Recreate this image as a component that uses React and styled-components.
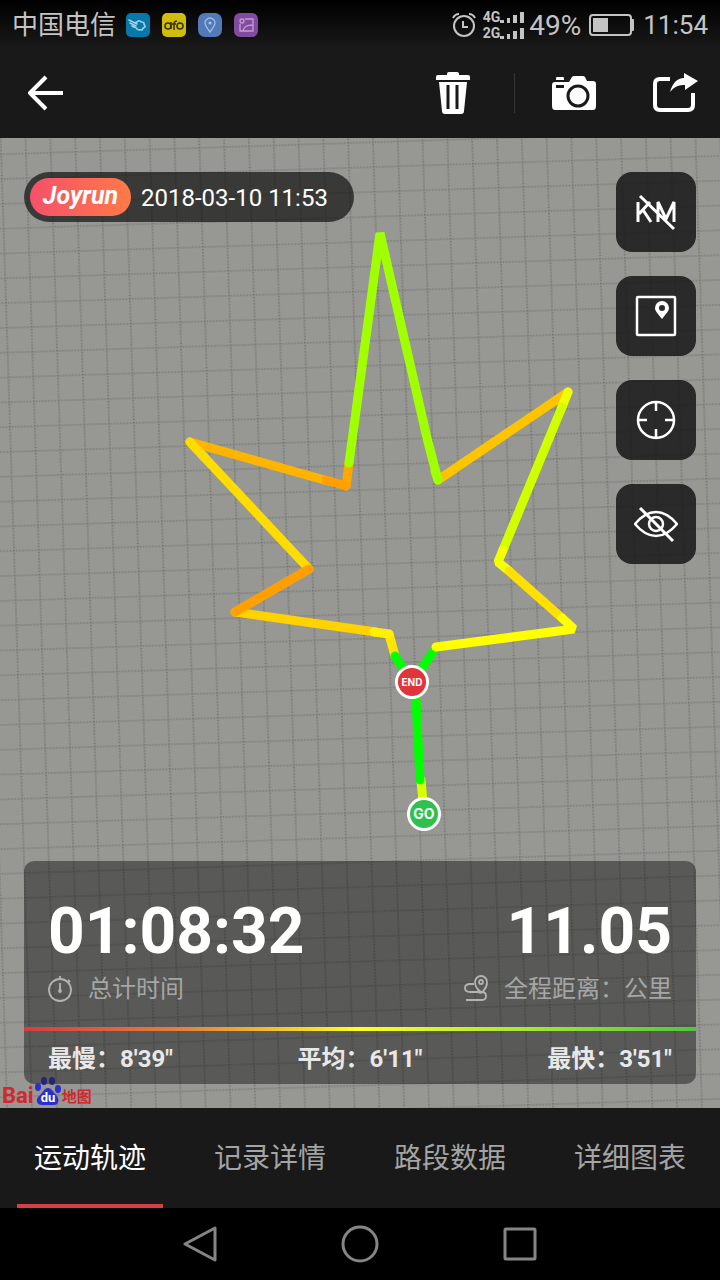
import React, { useState } from 'react';
import styled, { createGlobalStyle } from 'styled-components';

const tabs = ['运动轨迹', '记录详情', '路段数据', '详细图表'];

const segments = [
    { points: '424,676 421,642', color: '#d8ff00' },
    { points: '412,544 416,562 420,642', color: '#00ff00' },
    { points: '412,544 433,514', color: '#00ff00' },
    { points: '389,496 395,518', color: '#ffe600' },
    { points: '412,544 395,518', color: '#00ff00' },
    { points: '235,474 376,494', color: '#ffd200' },
    { points: '374,494 389,496', color: '#fff000' },
    { points: '190,304 309,431', color: '#ffdc00' },
    { points: '309,431 235,474', color: '#ffa000' },
    { points: '346,348 349,325', color: '#ffa800' },
    { points: '190,304 328,343', color: '#ffb400' },
    { points: '326,342 346,348', color: '#ffa000' },
    { points: '190,304 206,321', color: '#ffdc00' },
    { points: '349,325 380,95 427,300 438,342', color: '#a0ff00' },
    { points: '438,342 568,254', color: '#ffc400' },
    { points: '438,342 435,333', color: '#a0ff00' },
    { points: '568,254 562,269', color: '#f0ff00' },
    { points: '562,269 503,412', color: '#d2ff00' },
    { points: '503,412 498,424 509,433', color: '#f4ff00' },
    { points: '509,433 562,480', color: '#ffe000' },
    { points: '562,480 574,491 436,509', color: '#ffff00' },
];

export default function App() {
    const [active, setActive] = useState(tabs[0]);

    return (
        <Page>
            <GlobalStyle />
            <StatusBar />
            <Toolbar />
            <MapArea>
                <RouteMap />
                <MapTop>
                    <DatePill>
                        <Brand>Joyrun</Brand>
                        <time>2018-03-10 11:53</time>
                    </DatePill>
                    <MapControls />
                </MapTop>
                <Summary />
                <BaiduLogo />
            </MapArea>
            <TabBar>
                {tabs.map((tab) => (
                    <Tab key={tab} $active={tab === active} onClick={() => setActive(tab)}>{tab}</Tab>
                ))}
            </TabBar>
            <SystemNav />
        </Page>
    );
}

function StatusBar() {
    return (
        <StatusRow>
            <StatusGroup>
                <Carrier>中国电信</Carrier>
                <AppBadges>
                    <svg width="24" height="24" viewBox="0 0 24 24">
                        <rect width="24" height="24" rx="5" fill="#0878a8" />
                        <path d="M3 7l8 4M4 10l6 3M6 13c3 2 5 1 5 3 2 2 4 0 5 1 1-1 0-2 3-3 1-2-2-2-1-4-2-2-3 0-4-2-2-1-2 1-4 1" fill="none" stroke="#9fd2e2" strokeWidth="1.6" strokeLinecap="round" />
                    </svg>
                    <svg width="24" height="24" viewBox="0 0 24 24">
                        <rect width="24" height="24" rx="5" fill="#d0bd0d" />
                        <g fill="none" stroke="#3a350c" strokeWidth="1.6">
                            <circle cx="6" cy="13" r="3" />
                            <circle cx="18" cy="13" r="3" />
                            <path d="M9 9v7M12 17v-6q0-3 3-3M10 11h4" />
                        </g>
                    </svg>
                    <svg width="24" height="24" viewBox="0 0 24 24">
                        <rect width="24" height="24" rx="7" fill="#5279b8" />
                        <path d="M12 19C9 15 7 12 7 10a5 5 0 0 1 10 0c0 2-2 5-5 9z" fill="none" stroke="#a3bce0" strokeWidth="1.3" />
                        <circle cx="12" cy="10" r="1.5" fill="#b4c8e4" />
                    </svg>
                    <svg width="24" height="24" viewBox="0 0 24 24">
                        <rect width="24" height="24" rx="6" fill="#814ba0" />
                        <g fill="none" stroke="#c49dd6" strokeWidth="1.3">
                            <path d="M11 6h8v12H6v-7M9 18c1-4 3-6 10-6" />
                            <circle cx="8" cy="8" r="2" />
                        </g>
                    </svg>
                </AppBadges>
            </StatusGroup>
            <StatusGroup>
                <svg width="26" height="26" viewBox="0 0 26 26" fill="none" stroke="#c4c4c4" strokeWidth="2">
                    <circle cx="13" cy="14" r="10" />
                    <path d="M12 9v6h5M2 6q2-4 6-4M24 6q-2-4-6-4" />
                </svg>
                <Signals>
                    <Signal><span>4G</span><Bars /></Signal>
                    <Signal><span>2G</span><Bars /></Signal>
                </Signals>
                <Battery>49%</Battery>
                <svg width="46" height="24" viewBox="0 0 46 24">
                    <rect x="1" y="2" width="41" height="20" rx="3" fill="none" stroke="#c4c4c4" strokeWidth="2" />
                    <rect x="4" y="5" width="15" height="14" fill="#c4c4c4" />
                    <rect x="42" y="6" width="3" height="12" rx="1" fill="#c4c4c4" />
                </svg>
                <Clock>11:54</Clock>
            </StatusGroup>
        </StatusRow>
    );
}

function Bars() {
    return (
        <svg width="24" height="14" viewBox="0 0 24 14" fill="#c4c4c4">
            <rect x="0" y="9" width="4" height="3" />
            <rect x="7" y="7" width="3" height="5" />
            <rect x="13" y="4" width="4" height="8" />
            <rect x="20" y="1" width="4" height="11" />
        </svg>
    );
}

function Toolbar() {
    return (
        <ToolbarRow>
            <IconButton aria-label="返回">
                <svg width="36" height="36" viewBox="0 0 36 36" fill="none" stroke="#fff" strokeWidth="4">
                    <path d="M18 2L2 18l16 16M2 18h33" strokeLinejoin="round" />
                </svg>
            </IconButton>
            <Actions>
                <IconButton aria-label="删除">
                    <svg width="34" height="42" viewBox="0 0 34 42" fill="#fff">
                        <path d="M11 3V2q0-2 2-2h8q2 0 2 2v1h9q2 0 2 2v3H0V5q0-2 2-2zM3 10h28l-3 29q0 3-3 3H9q-3 0-3-3z" />
                        <path d="M12 13v24M21 13v24" stroke="#191919" strokeWidth="3" />
                    </svg>
                </IconButton>
                <Divider />
                <IconButton aria-label="相机">
                    <svg width="44" height="34" viewBox="0 0 44 34">
                        <path d="M4 2q0-1 1-1h6q1 0 1 1v2H4zM3 6h14l3-5q1-1 2-1h9q1 0 2 1l2 4h6q3 0 3 3v22q0 4-3 4H3q-3 0-3-4V9q0-3 3-3z" fill="#fff" />
                        <rect x="4" y="9" width="8" height="3" fill="#191919" />
                        <circle cx="26" cy="20" r="10" fill="none" stroke="#191919" strokeWidth="3" />
                    </svg>
                </IconButton>
                <IconButton aria-label="分享">
                    <svg width="46" height="40" viewBox="0 0 46 40">
                        <path d="M18 6H8q-5 0-5 5v21q0 5 5 5h28q5 0 5-5V20" fill="none" stroke="#fff" strokeWidth="4" />
                        <path d="M18 19Q22 5 32 5V0l14 8-13 9v-5Q24 11 18 19z" fill="#fff" />
                    </svg>
                </IconButton>
            </Actions>
        </ToolbarRow>
    );
}

function RouteMap() {
    return (
        <MapCanvas viewBox="0 0 720 970" preserveAspectRatio="xMidYMid slice">
            <defs>
                <pattern id="grid" width="24.8" height="24.8" patternUnits="userSpaceOnUse" patternTransform="translate(3.4 114.5) rotate(-1.85)">
                    <path d="M0 1H24.8M1 0V24.8" fill="none" stroke="#8b8c87" strokeWidth="1" />
                    <path d="M0 1H24.8M1 0V24.8" fill="none" stroke="#6a6b67" strokeWidth="1.2" strokeDasharray="1 2.1" />
                </pattern>
            </defs>
            <rect width="720" height="970" fill="#979894" />
            <rect width="720" height="970" fill="url(#grid)" />
            <g fill="none" strokeWidth="9" strokeLinecap="round" strokeLinejoin="bevel">
                {segments.map(({ points, color }) => (
                    <polyline key={points} points={points} stroke={color} />
                ))}
            </g>
            <g stroke="#fff" strokeWidth="3">
                <circle cx="412" cy="544" r="15.5" fill="#e0353b" />
                <circle cx="424" cy="676" r="15.5" fill="#2fc14b" />
            </g>
            <MarkerText x="412" y="548" fontSize="10">END</MarkerText>
            <MarkerText x="424" y="681" fontSize="14">GO</MarkerText>
        </MapCanvas>
    );
}

function MapControls() {
    return (
        <ControlList>
            <ControlButton aria-label="隐藏公里标记">
                <svg {...controlIcon} strokeWidth="3">
                    <path d="M4 12v20M16 12L5 24M9 20l8 12M24 32V12l8 17 8-17v20M6 6l34 33" />
                </svg>
            </ControlButton>
            <ControlButton aria-label="地图样式">
                <svg {...controlIcon}>
                    <rect x="3" y="3" width="38" height="38" rx="1" />
                    <path d="M28 25c-4-5-7-8-7-11a7 7 0 0 1 14 0c0 3-3 6-7 11zM28 11a3 3 0 1 1 0 6 3 3 0 0 1 0-6z" fill="#fff" fillRule="evenodd" stroke="none" />
                </svg>
            </ControlButton>
            <ControlButton aria-label="定位">
                <svg {...controlIcon}>
                    <circle cx="22" cy="22" r="18" />
                    <path d="M22 4v9M22 31v9M4 22h9M31 22h9" />
                </svg>
            </ControlButton>
            <ControlButton aria-label="隐藏轨迹">
                <svg {...controlIcon}>
                    <path d="M1 22Q11 10 22 10t21 12Q33 34 22 34T1 22z" strokeLinejoin="round" />
                    <circle cx="22" cy="22" r="7" />
                    <path d="M6 6l33 33" strokeWidth="3" />
                </svg>
            </ControlButton>
        </ControlList>
    );
}

const controlIcon = {
    width: 44,
    height: 44,
    viewBox: '0 0 44 44',
    fill: 'none',
    stroke: '#fff',
    strokeWidth: 2.5,
};

function Summary() {
    return (
        <Panel>
            <Totals>
                <Total>
                    <Value>01:08:32</Value>
                    <Label>
                        <svg width="24" height="28" viewBox="0 0 24 28" fill="none" stroke="#b4b4b4" strokeWidth="1.8">
                            <circle cx="12" cy="15" r="11" />
                            <path d="M12 4V1M12 8v8M20 5l2 2" />
                            <circle cx="12" cy="16" r="1" />
                        </svg>
                        总计时间
                    </Label>
                </Total>
                <Total $end>
                    <Value>11.05</Value>
                    <Label>
                        <svg width="24" height="28" viewBox="0 0 24 28" fill="none" stroke="#b4b4b4" strokeWidth="1.8">
                            <path d="M13 16c3 3 5 2 7-1 2-2 3-5 3-8a6 6 0 0 0-12 0c0 4 3 8 6 10M10 9H6q-5 0-5 4t5 4h12q4 0 4 4t-4 4H2" />
                            <circle cx="17" cy="7" r="2" />
                        </svg>
                        全程距离：公里
                    </Label>
                </Total>
            </Totals>
            <PaceScale />
            <Paces>
                <span>最慢：8'39"</span>
                <span>平均：6'11"</span>
                <span>最快：3'51"</span>
            </Paces>
        </Panel>
    );
}

function BaiduLogo() {
    return (
        <Baidu>
            <span>Bai</span>
            <svg width="28" height="30" viewBox="0 0 28 30" fill="#2b2fd0">
                <ellipse cx="4" cy="11" rx="3" ry="4" />
                <ellipse cx="10" cy="5" rx="3" ry="4" fill="#242479" />
                <ellipse cx="18" cy="5" rx="3" ry="4" fill="#242479" />
                <ellipse cx="24" cy="13" rx="3" ry="4" />
                <path d="M14 12c4 0 5 4 8 7 4 4 3 10-2 10H8c-5 0-7-5-3-9 4-3 5-8 9-8z" />
                <text x="14" y="26" fill="#fff" fontSize="13" fontWeight="700" textAnchor="middle">du</text>
            </svg>
            <small>地图</small>
        </Baidu>
    );
}

function SystemNav() {
    return (
        <NavRow>
            <IconButton aria-label="后退">
                <svg width="36" height="36" viewBox="0 0 36 36" {...navIcon}>
                    <path d="M33 2v32L3 18z" />
                </svg>
            </IconButton>
            <IconButton aria-label="主页">
                <svg width="40" height="40" viewBox="0 0 40 40" {...navIcon}>
                    <circle cx="20" cy="20" r="17" />
                </svg>
            </IconButton>
            <IconButton aria-label="最近任务">
                <svg width="36" height="36" viewBox="0 0 36 36" {...navIcon}>
                    <rect x="3" y="3" width="30" height="30" rx="1" />
                </svg>
            </IconButton>
        </NavRow>
    );
}

const navIcon = {
    fill: 'none',
    stroke: '#858585',
    strokeWidth: 3,
    strokeLinejoin: 'round',
};

const GlobalStyle = createGlobalStyle`
    * {
        box-sizing: border-box;
    }

    body {
        margin: 0;
        background: #000;
        font-family: Roboto, "Noto Sans CJK SC", sans-serif;
    }

    svg {
        display: block;
    }
`

const Page = styled.div`
    min-height: 100vh;
    display: flex;
    flex-direction: column;
    background: #191919;
`

const StatusRow = styled.header`
    height: 48px;
    padding: 2px 12px 0;
    display: flex;
    align-items: center;
    justify-content: space-between;
    background: linear-gradient(#000, #191919);
    color: #c4c4c4;
`

const StatusGroup = styled.div`
    display: flex;
    align-items: center;
`

const Carrier = styled.span`
    margin-right: 10px;
    font-size: 26px;
    line-height: 44px;
`

const AppBadges = styled.div`
    display: flex;
    gap: 12px;
`

const Signals = styled.div`
    display: flex;
    flex-direction: column;
    margin: 0 5px 0 6px;
`

const Signal = styled.div`
    display: flex;
    align-items: flex-end;
    height: 16px;
    font-size: 14px;
    font-weight: 700;
    line-height: 16px;
`

const Battery = styled.span`
    margin-right: 8px;
    font-size: 28px;
`

const Clock = styled.time`
    margin-left: 8px;
    font-size: 26px;
`

const ToolbarRow = styled.nav`
    height: 90px;
    padding: 0 22px 0 28px;
    display: flex;
    align-items: center;
    justify-content: space-between;
`

const Actions = styled.div`
    display: flex;
    align-items: center;
`

const IconButton = styled.button`
    display: flex;
    align-items: center;
    justify-content: center;
    padding: 0;
    border: 0;
    background: none;
    cursor: pointer;

    ${Actions} & + & {
        margin-left: 56px;
    }
`

const Divider = styled.span`
    width: 1px;
    height: 40px;
    margin: 0 37px 0 44px;
    background: #363636;
`

const MapArea = styled.main`
    position: relative;
    flex: 1;
    display: flex;
    flex-direction: column;
    justify-content: space-between;
    padding: 34px 24px 24px;
    background: #979894;
    isolation: isolate;
`

const MapCanvas = styled.svg`
    position: absolute;
    inset: 0;
    z-index: -1;
    width: 100%;
    height: 100%;
`

const MarkerText = styled.text`
    fill: #fff;
    font-family: Inter, sans-serif;
    font-weight: 700;
    text-anchor: middle;
`

const MapTop = styled.div`
    display: flex;
    align-items: flex-start;
    justify-content: space-between;
`

const DatePill = styled.div`
    height: 50px;
    padding: 0 26px 0 6px;
    display: flex;
    align-items: center;
    gap: 10px;
    border-radius: 25px;
    background: rgba(0, 0, 0, 0.62);
    color: #fff;
    font-size: 24px;
    line-height: 50px;

    time {
        padding-top: 2px;
    }
`

const Brand = styled.strong`
    height: 38px;
    width: 101px;
    border-radius: 19px;
    background: linear-gradient(90deg, #f6506a, #ff7a48);
    font-size: 25px;
    font-style: italic;
    line-height: 36px;
    text-align: center;
`

const ControlList = styled.div`
    display: flex;
    flex-direction: column;
    gap: 24px;
`

const ControlButton = styled.button`
    width: 80px;
    height: 80px;
    padding: 0;
    display: grid;
    place-items: center;
    border: 0;
    border-radius: 16px;
    background: rgba(24, 25, 25, 0.87);
    cursor: pointer;
`

const Panel = styled.section`
    border-radius: 10px;
    background: rgba(0, 0, 0, 0.41);
`

const Totals = styled.div`
    display: flex;
    justify-content: space-between;
    padding: 33px 24px 19px;
`

const Total = styled.div`
    display: flex;
    flex-direction: column;
    align-items: ${({ $end }) => $end ? 'flex-end' : 'flex-start'};
`

const Value = styled.strong`
    color: #fff;
    font-size: 64px;
    line-height: 76px;
`

const Label = styled.span`
    display: flex;
    align-items: center;
    gap: 16px;
    color: #a6a6a6;
    font-size: 24px;
    line-height: 38px;
`

const PaceScale = styled.div`
    height: 4px;
    background: linear-gradient(90deg, #d63c3f, #e8863a 25%, #ffff22 50%, #a4e830 75%, #4fc83c);
`

const Paces = styled.div`
    display: flex;
    justify-content: space-between;
    padding: 10px 24px 7px;
    color: #e8e8e8;
    font-size: 24px;
    font-weight: 700;
    line-height: 36px;
`

const Baidu = styled.div`
    position: absolute;
    left: 2px;
    bottom: 2px;
    display: flex;
    align-items: flex-end;
    color: #d2282d;
    font-size: 22px;
    font-weight: 700;
    line-height: 20px;

    small {
        font-size: 15px;
        line-height: 17px;
    }
`

const TabBar = styled.nav`
    height: 100px;
    display: grid;
    grid-template-columns: repeat(4, 1fr);
    background: #191919;
`

const Tab = styled.button`
    margin: 0 17px;
    padding: 0;
    border: 0;
    border-bottom: 4px solid ${({ $active }) => $active ? '#d43f48' : 'transparent'};
    background: none;
    color: ${({ $active }) => $active ? '#fff' : '#a4a4a4'};
    font-family: inherit;
    font-size: 28px;
    cursor: pointer;
`

const NavRow = styled.footer`
    height: 72px;
    display: flex;
    align-items: center;
    justify-content: center;
    gap: 122px;
    background: #000;
`
